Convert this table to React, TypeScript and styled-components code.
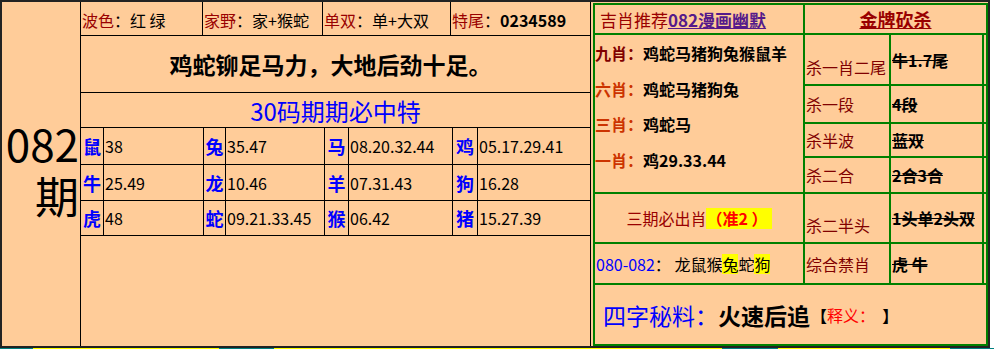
import * as React from "react";
import styled, { createGlobalStyle } from "styled-components";

const GlobalStyle = createGlobalStyle`
  html, body {
    margin: 0;
    padding: 0;
    background: #ffffff;
  }
  body {
    font-family: "Noto Sans CJK SC", "Noto Sans", sans-serif;
    font-size: 16px;
    color: #000;
  }
`;

const Frame = styled.div`
  width: 990px;
  height: 348px;
  box-sizing: border-box;
  border: 2px solid #222;
  background: #ffcc99;
  display: flex;
`;

const LeftTable = styled.div`
  width: 589px;
  margin-right: 2px;
  display: flex;
`;

const IssueCell = styled.div`
  width: 79px;
  flex: none;
  border-right: 1px solid #000;
  display: flex;
  align-items: center;
  justify-content: flex-end;
  text-align: right;
  padding: 0 1px 10px 0;
  box-sizing: border-box;
  font-size: 44px;
  line-height: 52px;
`;

const Content = styled.div`
  flex: 1;
  border-right: 1px solid #000;
  background: #000;
  display: flex;
  flex-direction: column;
  gap: 1px;
`;

const TopRow = styled.div`
  height: 33px;
  display: grid;
  grid-template-columns: 121px 119px 127px 1fr;
  gap: 1px;
`;

const TopCell = styled.div`
  background: #ffcc99;
  display: flex;
  align-items: center;
  padding: 2px 0 0 1px;
  white-space: nowrap;
`;

const Key = styled.span`
  color: #990000;
`;

const Strong = styled.b`
  font-weight: bold;
`;

const Slogan = styled.div`
  height: 56px;
  background: #ffcc99;
  display: flex;
  align-items: center;
  justify-content: center;
  padding-right: 10px;
  font-size: 23px;
  font-weight: bold;
`;

const Banner = styled.div`
  height: 34px;
  background: #ffcc99;
  display: flex;
  align-items: center;
  justify-content: center;
  color: #0000ff;
  font-size: 24px;
`;

const ZodiacGrid = styled.div`
  display: grid;
  grid-template-columns: 22px 99px 21px 98px 23px 103px 24px 1fr;
  grid-template-rows: 36px 35px 34px;
  gap: 1px;
`;

const Animal = styled.div`
  background: #ffcc99;
  display: flex;
  align-items: center;
  justify-content: center;
  color: #0000ff;
  font-weight: bold;
  font-size: 18px;
`;

const Numbers = styled.div`
  background: #ffcc99;
  display: flex;
  align-items: center;
  padding-left: 1px;
  font-size: 16px;
`;

const Filler = styled.div`
  flex: 1;
  background: #ffcc99;
`;

const RightPanel = styled.div`
  width: 395px;
  height: 343px;
  margin-top: 1px;
  box-sizing: border-box;
  padding: 2px;
  background: #008000;
  display: grid;
  grid-template-columns: 208px 84px 91px 2px;
  grid-template-rows: 28px 49px 36px 32px 34px 48px 39px 59px;
  gap: 2px;
`;

const Cell = styled.div`
  background: #ffcc99;
  display: flex;
  align-items: center;
  white-space: nowrap;
`;

const HeaderLeft = styled(Cell)`
  padding-left: 5px;
  font-size: 17px;
  color: #990000;
`;

const HeaderLink = styled.a`
  color: #551a8b;
  font-weight: bold;
  text-decoration: underline;
`;

const HeaderRight = styled(Cell)`
  grid-column: span 3;
  justify-content: center;
  font-size: 18px;
  font-weight: bold;
  color: #990000;
  text-decoration: underline;
`;

const Picks = styled.div`
  grid-row: span 4;
  background: #ffcc99;
  padding-top: 1px;
`;

const PickLine = styled.div`
  line-height: 35.5px;
  font-size: 16px;
  white-space: nowrap;
`;

const PickKey = styled.span<{ $dark?: boolean }>`
  color: ${(p) => (p.$dark ? "#800000" : "#cc3300")};
  font-weight: bold;
`;

const PickValue = styled.span`
  font-weight: bold;
`;

const KillLabel = styled(Cell)<{ $drop?: boolean }>`
  padding: ${(p) => (p.$drop ? "14px 0 0 1px" : "0 0 0 1px")};
  color: #800000;
  font-size: 16px;
`;

const KillValue = styled(Cell)`
  padding-left: 1px;
  font-weight: bold;
  font-size: 16px;
  text-decoration: line-through;
`;

const Must = styled(Cell)`
  justify-content: center;
  color: #990000;
  font-size: 16px;
`;

const Mark = styled.span`
  background: #ffff00;
  color: #ff0000;
  font-weight: bold;
  padding: 0 4px 0 0;
  line-height: 21px;
  white-space: pre;
`;

const Range = styled(Cell)`
  padding-left: 1px;
  font-size: 16px;
`;

const Blue = styled.span`
  color: #0000ff;
`;

const Hi = styled.span`
  background: #ffff00;
  line-height: 20px;
`;

const Secret = styled(Cell)`
  grid-column: span 4;
  padding: 1px 0 0 8px;
  font-size: 23px;
`;

const SecretName = styled.b`
  font-weight: bold;
`;

const Note = styled.span`
  font-size: 16px;
  color: #ff0000;
  margin-left: 1px;
`;

const Bracket = styled.b`
  color: #000;
  font-weight: bold;
`;

const Strip = styled.div`
  width: 994px;
  height: 1px;
  display: flex;
`;

const Seg = styled.div<{ $teal?: boolean }>`
  background: ${(p) => (p.$teal ? "#008080" : "#ffff00")};
`;

const zodiac: [string, string][] = [
  ["鼠", "38"],
  ["兔", "35.47"],
  ["马", "08.20.32.44"],
  ["鸡", "05.17.29.41"],
  ["牛", "25.49"],
  ["龙", "10.46"],
  ["羊", "07.31.43"],
  ["狗", "16.28"],
  ["虎", "48"],
  ["蛇", "09.21.33.45"],
  ["猴", "06.42"],
  ["猪", "15.27.39"],
];

const picks = [
  { key: "九肖：", value: "鸡蛇马猪狗兔猴鼠羊", dark: true },
  { key: "六肖：", value: "鸡蛇马猪狗兔" },
  { key: "三肖：", value: "鸡蛇马" },
  { key: "一肖：", value: "鸡29.33.44" },
];

const kills = [
  { label: "杀一肖二尾", value: "牛1.7尾", drop: true },
  { label: "杀一段", value: "4段" },
  { label: "杀半波", value: "蓝双" },
  { label: "杀二合", value: "2合3合" },
  { label: "杀二半头", value: "1头单2头双", drop: true },
  { label: "综合禁肖", value: "虎 牛" },
];

const strip: [number, boolean][] = [
  [33, true],
  [186, false],
  [55, true],
  [448, false],
  [56, true],
  [172, false],
  [44, true],
];

const KillRow = ({ label, value, drop }: { label: string; value: string; drop?: boolean }) => (
  <>
    <KillLabel $drop={drop}>{label}</KillLabel>
    <KillValue>{value}</KillValue>
    <Cell />
  </>
);

export default function App() {
  return (
    <>
      <GlobalStyle />
      <Frame>
        <LeftTable>
          <IssueCell>082期</IssueCell>
          <Content>
            <TopRow>
              <TopCell>
                <Key>波色</Key>：红 绿
              </TopCell>
              <TopCell>
                <Key>家野</Key>：家+猴蛇
              </TopCell>
              <TopCell>
                <Key>单双</Key>：单+大双
              </TopCell>
              <TopCell>
                <Key>特尾</Key>：<Strong>0234589</Strong>
              </TopCell>
            </TopRow>
            <Slogan>鸡蛇铆足马力，大地后劲十足。</Slogan>
            <Banner>30码期期必中特</Banner>
            <ZodiacGrid>
              {zodiac.map(([animal, nums]) => (
                <React.Fragment key={animal}>
                  <Animal>{animal}</Animal>
                  <Numbers>{nums}</Numbers>
                </React.Fragment>
              ))}
            </ZodiacGrid>
            <Filler />
          </Content>
        </LeftTable>
        <RightPanel>
          <HeaderLeft>
            吉肖推荐<HeaderLink>082漫画幽默</HeaderLink>
          </HeaderLeft>
          <HeaderRight>金牌砍杀</HeaderRight>
          <Picks>
            {picks.map((p) => (
              <PickLine key={p.key}>
                <PickKey $dark={p.dark}>{p.key}</PickKey>
                <PickValue>{p.value}</PickValue>
              </PickLine>
            ))}
          </Picks>
          {kills.slice(0, 4).map((k) => (
            <KillRow key={k.label} {...k} />
          ))}
          <Must>
            三期必出肖<Mark>（准2 ）</Mark>
          </Must>
          <KillRow {...kills[4]} />
          <Range>
            <Blue>080-082</Blue>： 龙鼠猴<Hi>兔</Hi>蛇<Hi>狗</Hi>
          </Range>
          <KillRow {...kills[5]} />
          <Secret>
            <Blue>四字秘料：</Blue>
            <SecretName>火速后追</SecretName>
            <Note>
              <Bracket>【</Bracket>释义：&nbsp;&nbsp;<Bracket>】</Bracket>
            </Note>
          </Secret>
        </RightPanel>
      </Frame>
      <Strip>
        {strip.map(([w, teal], i) => (
          <Seg key={i} $teal={teal} style={{ width: w }} />
        ))}
      </Strip>
    </>
  );
}
